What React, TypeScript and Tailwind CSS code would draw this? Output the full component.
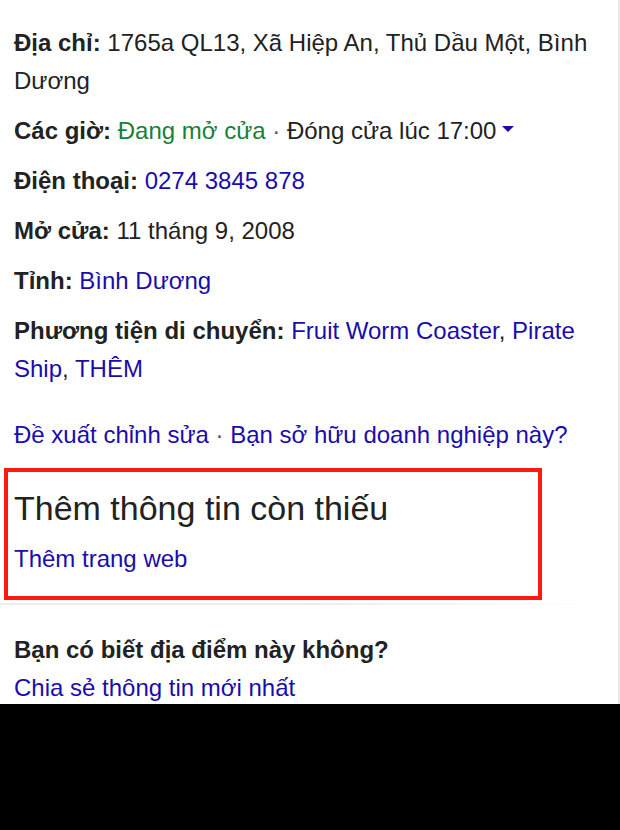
import React from "react";

const blue = "text-[#1a0dab]";

function Row({ label, children, className = "" }: { label: string; children: React.ReactNode; className?: string }) {
  return (
    <div className={`leading-[38px] ${className}`}>
      <span className="font-bold text-[#222]">{label}</span> {children}
    </div>
  );
}

export default function App() {
  return (
    <div className="w-[620px] h-[830px] flex flex-col bg-black" style={{ fontFamily: "'Liberation Sans', Arial, sans-serif" }}>
      <div className="h-[704px] bg-white border-r-2 border-[#e8e8e8] text-[24px] text-[#222] overflow-hidden">
        <div className="pt-[24px] pl-[14px] pr-[12px] flex flex-col gap-[12px]">
          <Row label="Địa chỉ:">1765a QL13, Xã Hiệp An, Thủ Dầu Một, Bình Dương</Row>
          <Row label="Các giờ:">
            <span className="text-[#188038]">Đang mở cửa</span>
            <span className="text-[#4d5156]"> · </span>
            Đóng cửa lúc 17:00
            <svg width="12" height="6" viewBox="0 0 12 6" className="inline-block ml-[6px] mb-[7px]">
              <path d="M0 0 L12 0 L6 6 Z" fill="#1a0dab" />
            </svg>
          </Row>
          <Row label="Điện thoại:">
            <span className={blue}>0274 3845 878</span>
          </Row>
          <Row label="Mở cửa:">11 tháng 9, 2008</Row>
          <Row label="Tỉnh:">
            <span className={blue}>Bình Dương</span>
          </Row>
          <Row label="Phương tiện di chuyển:">
            <span className={blue}>Fruit Worm Coaster</span>, <span className={blue}>Pirate Ship</span>,{" "}
            <span className={blue}>THÊM</span>
          </Row>
        </div>
        <div className="px-[14px] mt-[28px] leading-[38px]">
          <span className={blue}>Đề xuất chỉnh sửa</span>
          <span className="text-[#4d5156]"> · </span>
          <span className={blue}>Bạn sở hữu doanh nghiệp này?</span>
        </div>
        <div className="mt-[14px] ml-[4px] w-[538px] h-[132px] border-[4px] border-[#ff1a0f] px-[6px] pt-[16px]">
          <div className="text-[34px] leading-[40px] text-[#222]">Thêm thông tin còn thiếu</div>
          <div className={`${blue} leading-[38px] mt-[12px]`}>Thêm trang web</div>
        </div>
        <div className="h-[2px] w-[600px] mt-[3px] bg-gradient-to-r from-[#ececec] via-[#ececec] to-transparent" />
        <div className="px-[14px] mt-[26px]">
          <div className="font-bold leading-[38px]">Bạn có biết địa điểm này không?</div>
          <div className={`${blue} leading-[38px]`}>Chia sẻ thông tin mới nhất</div>
        </div>
      </div>
      <div className="flex-1 bg-black" />
    </div>
  );
}
